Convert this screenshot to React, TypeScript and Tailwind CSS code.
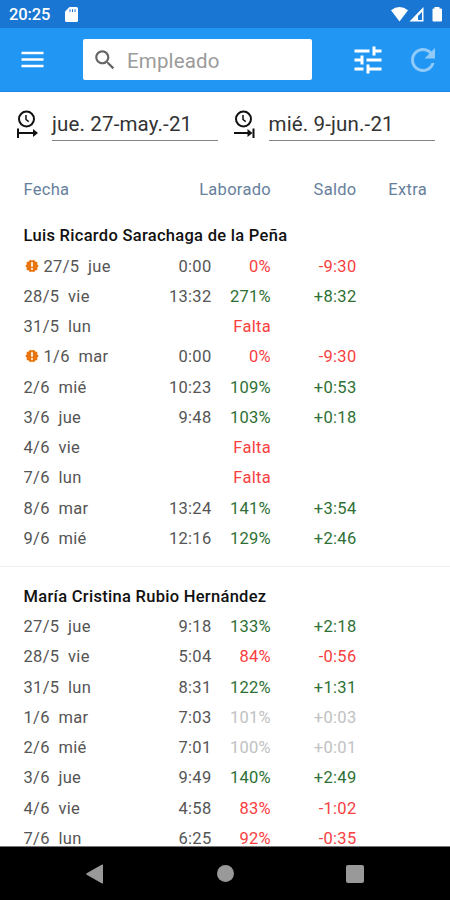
import React from "react";

type Tone = "good" | "bad" | "muted";
type Row = { date: string; day: string; worked?: string; pct: string; balance?: string; tone: Tone; alert?: boolean };
type Employee = { name: string; rows: Row[] };

const tones: Record<Tone, string> = {
  good: "text-[#2e7034]",
  bad: "text-[#f8403f]",
  muted: "text-[#c0c1c3]",
};

const employees: Employee[] = [
  {
    name: "Luis Ricardo Sarachaga de la Peña",
    rows: [
      { date: "27/5", day: "jue", worked: "0:00", pct: "0%", balance: "-9:30", tone: "bad", alert: true },
      { date: "28/5", day: "vie", worked: "13:32", pct: "271%", balance: "+8:32", tone: "good" },
      { date: "31/5", day: "lun", pct: "Falta", tone: "bad" },
      { date: "1/6", day: "mar", worked: "0:00", pct: "0%", balance: "-9:30", tone: "bad", alert: true },
      { date: "2/6", day: "mié", worked: "10:23", pct: "109%", balance: "+0:53", tone: "good" },
      { date: "3/6", day: "jue", worked: "9:48", pct: "103%", balance: "+0:18", tone: "good" },
      { date: "4/6", day: "vie", pct: "Falta", tone: "bad" },
      { date: "7/6", day: "lun", pct: "Falta", tone: "bad" },
      { date: "8/6", day: "mar", worked: "13:24", pct: "141%", balance: "+3:54", tone: "good" },
      { date: "9/6", day: "mié", worked: "12:16", pct: "129%", balance: "+2:46", tone: "good" },
    ],
  },
  {
    name: "María Cristina Rubio Hernández",
    rows: [
      { date: "27/5", day: "jue", worked: "9:18", pct: "133%", balance: "+2:18", tone: "good" },
      { date: "28/5", day: "vie", worked: "5:04", pct: "84%", balance: "-0:56", tone: "bad" },
      { date: "31/5", day: "lun", worked: "8:31", pct: "122%", balance: "+1:31", tone: "good" },
      { date: "1/6", day: "mar", worked: "7:03", pct: "101%", balance: "+0:03", tone: "muted" },
      { date: "2/6", day: "mié", worked: "7:01", pct: "100%", balance: "+0:01", tone: "muted" },
      { date: "3/6", day: "jue", worked: "9:49", pct: "140%", balance: "+2:49", tone: "good" },
      { date: "4/6", day: "vie", worked: "4:58", pct: "83%", balance: "-1:02", tone: "bad" },
      { date: "7/6", day: "lun", worked: "6:25", pct: "92%", balance: "-0:35", tone: "bad" },
    ],
  },
];

function AlertIcon() {
  return (
    <svg className="mr-[5px] mb-[2px] ml-px h-[14px] w-[14px] shrink-0" viewBox="0.5 0.5 23 23">
      <path fill="#e8750f" d="M23 12l-2.44-2.78.34-3.68-3.61-.82-1.89-3.18L12 3 8.6 1.54 6.71 4.72l-3.61.81.34 3.68L1 12l2.44 2.78-.34 3.69 3.61.82 1.89 3.18L12 21l3.4 1.46 1.89-3.18 3.61-.82-.34-3.68L23 12z" />
      <path fill="#fff" d="M10.6 6h2.8v7.4h-2.8zM10.6 15.4h2.8V18h-2.8z" />
    </svg>
  );
}

function StatusBar() {
  return (
    <div className="flex h-7 shrink-0 items-center bg-[#1976d2] pr-[8px] pl-[9px] text-white">
      <span className="mt-[2px] text-[16.5px] font-medium tracking-[-0.1px]">20:25</span>
      <svg className="mt-px ml-[15px] h-[15px] w-[13px]" viewBox="0 0 13 15">
        <path fill="#fff" d="M4.5 0H11.5Q13 0 13 1.5V13.5Q13 15 11.5 15H1.5Q0 15 0 13.5V4.5Z" />
        <path stroke="#1976d2" strokeWidth="1" d="M5 2.2V5M7.5 2.2V5M10 2.2V5" />
      </svg>
      <svg className="ml-auto h-[15px] w-[51px]" viewBox="0 0 51 15">
        <path fill="#fff" d="M0 3.2Q8.5 -3 17 3.2L8.5 14.5Z" />
        <path fill="#fff" fillRule="evenodd" d="M32.5 0V14.5H18.5ZM31 5L27 9V13H31Z" />
        <path fill="#fff" d="M43.5 0H48.5V1.5H50Q51 1.5 51 2.5V13.5Q51 14.5 50 14.5H42.5Q41.5 14.5 41.5 13.5V2.5Q41.5 1.5 42.5 1.5H43.5Z" />
      </svg>
    </div>
  );
}

function AppBar() {
  return (
    <div className="flex h-16 shrink-0 items-center border-b border-[#1b85e3] bg-[#2196f3]">
      <svg className="ml-[21px] h-[17px] w-[23px]" viewBox="0 0 23 17" stroke="#fff" strokeWidth="2.6">
        <path d="M0.5 2H22.5M0.5 8.5H22.5M0.5 15H22.5" />
      </svg>
      <div className="ml-[39px] flex h-[41px] w-[229px] items-center rounded-[2px] bg-white">
        <svg className="ml-[9px] h-[26px] w-[26px]" viewBox="0 0 24 24" fill="#666">
          <path d="M15.5 14h-.79l-.28-.27C15.41 12.59 16 11.11 16 9.5 16 5.91 13.09 3 9.5 3S3 5.91 3 9.5 5.91 16 9.5 16c1.61 0 3.09-.59 4.23-1.57l.27.28v.79l5 4.99L20.49 19l-4.99-5zm-6 0C7.01 14 5 11.99 5 9.5S7.01 5 9.5 5 14 7.01 14 9.5 11.99 14 9.5 14z" />
        </svg>
        <span className="mt-[3px] ml-[9px] text-[20.5px] tracking-[0.15px] text-[#9b9b9b]">Empleado</span>
      </div>
      <svg className="ml-[38px] h-9 w-9" viewBox="0 0 24 24" fill="#fff">
        <path d="M3 17v2h6v-2H3zM3 5v2h10V5H3zm10 16v-2h8v-2h-8v-2h-2v6h2zM7 9v2H3v2h4v2h2V9H7zm14 4v-2H11v2h10zm-6-4h2V7h4V5h-4V3h-2v6z" />
      </svg>
      <svg className="ml-[19px] h-9 w-9" viewBox="0 0 24 24" fill="#8fcaf9">
        <path d="M17.65 6.35C16.2 4.9 14.21 4 12 4c-4.42 0-7.99 3.58-7.99 8s3.57 8 7.99 8c3.73 0 6.84-2.55 7.73-6h-2.08c-.82 2.33-3.04 4-5.65 4-3.31 0-6-2.69-6-6s2.69-6 6-6c1.66 0 3.14.69 4.22 1.78L13 11h7V4l-2.35 2.35z" />
      </svg>
    </div>
  );
}

function RangeIcon({ end = false }: { end?: boolean }) {
  return (
    <svg className="h-7 w-[22px]" viewBox="0 0 22 28" fill="none" stroke="#111" strokeWidth="2">
      <circle cx="9.5" cy="9" r="7.5" />
      <path strokeWidth="1.5" d="M9 5V9.5L11.7 11.7" />
      {end ? (
        <>
          <path d="M-1 23H16M19.5 18.5V28" />
          <path fill="#111" stroke="none" d="M13.5 19L18.5 23L13.5 27Z" />
        </>
      ) : (
        <>
          <path d="M1 18.5V28M1 23H18" />
          <path fill="#111" stroke="none" d="M16 19L21 23L16 27Z" />
        </>
      )}
    </svg>
  );
}

function DateField({ value, end }: { value: string; end?: boolean }) {
  return (
    <div className="flex">
      <RangeIcon end={end} />
      <div className="ml-[13px] h-[31px] w-[166px] border-b border-[#858585] text-[20.5px] leading-[29px] tracking-[0.15px] text-[#333]">
        {value}
      </div>
    </div>
  );
}

const columns = "grid grid-cols-[118px_70px_59.5px_85.5px_70.5px] items-center pl-[23.5px]";

function RecordRow({ row }: { row: Row }) {
  return (
    <div className={columns + " h-[30.25px] text-right text-[#555]"}>
      <div className="flex items-center text-left whitespace-pre">
        {row.alert && <AlertIcon />}
        {row.date + "  " + row.day}
      </div>
      <div>{row.worked}</div>
      <div className={tones[row.tone]}>{row.pct}</div>
      <div className={tones[row.tone]}>{row.balance}</div>
      <div />
    </div>
  );
}

export default function App() {
  return (
    <div className="flex h-[900px] w-[450px] flex-col overflow-hidden bg-white font-['Roboto',sans-serif]">
      <StatusBar />
      <AppBar />
      <div className="flex shrink-0 gap-[15.5px] pt-[18px] pl-[17px]">
        <DateField value="jue. 27-may.-21" />
        <DateField value="mié. 9-jun.-21" end />
      </div>
      <main className="flex min-h-0 flex-1 flex-col text-[16.5px] leading-[18px] tracking-[0.29px]">
        <div className={columns + " mt-[40px] shrink-0 text-right text-[#66809c]"}>
          <div className="text-left">Fecha</div>
          <div className="col-span-2">Laborado</div>
          <div>Saldo</div>
          <div>Extra</div>
        </div>
        {employees.map((employee, i) => (
          <section key={employee.name} className={i === 0 ? "mt-[22px] h-[344.5px] shrink-0" : "shrink-0 border-t border-[#f0f0f0] pt-[15px]"}>
            <h2 className="h-[30.4px] pl-[23.5px] leading-[30px] font-medium text-[#111]">{employee.name}</h2>
            {employee.rows.map((row) => (
              <RecordRow key={row.date} row={row} />
            ))}
          </section>
        ))}
      </main>
      <nav className="relative flex h-[54px] shrink-0 items-center border-t border-[#777] bg-black pl-[86px]">
        <svg className="h-5 w-[17px]" viewBox="0 0 17 20" fill="#999">
          <path d="M15.6 0.8Q17 0 17 1.5V18.5Q17 20 15.6 19.2L0.7 10.8Q-0.3 10 0.7 9.2Z" />
        </svg>
        <div className="ml-[114px] h-[17px] w-[17px] rounded-full bg-[#999]" />
        <div className="ml-[112px] h-[18px] w-[18px] rounded-[2px] bg-[#999]" />
      </nav>
    </div>
  );
}
